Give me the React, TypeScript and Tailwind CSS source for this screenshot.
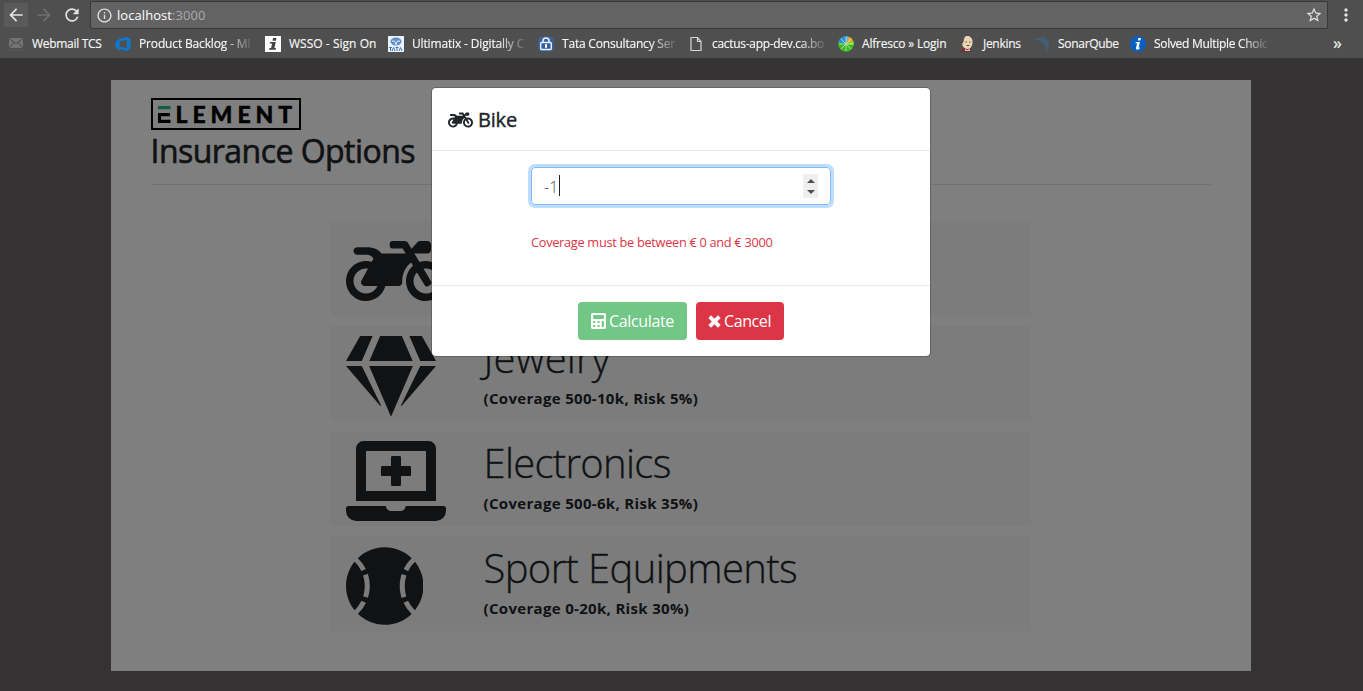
import React from 'react';
import { FaMotorcycle, FaGem, FaLaptopMedical, FaBaseballBall, FaCalculator } from 'react-icons/fa';
import { MdArrowBack, MdArrowForward, MdRefresh, MdInfoOutline, MdStarBorder, MdMoreVert } from 'react-icons/md';

type BookmarkProps = { icon: React.ReactNode; label: string; width: string; fade?: boolean; tracking?: string };

function Bookmark({ icon, label, width, fade, tracking = 'tracking-[-0.3px]' }: BookmarkProps) {
  return (
    <div className={`flex h-full shrink-0 items-center gap-2 ${width}`}>
      <span className="flex h-4 w-4 shrink-0 items-center justify-center">{icon}</span>
      <span className={`whitespace-nowrap text-[12px] leading-4 text-[#f6f6f6] [-webkit-text-stroke:0.15px_#f6f6f6] ${tracking} ${fade ? '[mask-image:linear-gradient(to_right,black_calc(100%_-_26px),rgb(0_0_0/0.15)_100%)]' : ''}`}>
        {label}
      </span>
    </div>
  );
}

function MailIcon() {
  return (
    <svg width="16" height="16" viewBox="0 0 16 16">
      <rect x="1" y="2" width="14" height="10" fill="#747474" />
      <path d="M1 2.500l7 5 7-5M1 12l5-5.500M15 12l-5-5.500" stroke="#484848" fill="none" />
      <path d="M1 14h14" stroke="#5f5f5f" />
    </svg>
  );
}

function AzureIcon() {
  return (
    <svg width="17" height="16" viewBox="0 0 17 16">
      <path d="M.5 5.500L5 2.500 12 .5l4.500 2v10L13 15.500 5 13.500v2L.5 11zM5 5v6l7.500 1.500V3.500z" fill="#0e78cf" fillRule="evenodd" />
    </svg>
  );
}

function InfoSquareIcon() {
  return (
    <svg width="16" height="16" viewBox="0 0 16 16">
      <rect width="16" height="16" fill="#fff" />
      <path d="M8 2h3.500l-.6 2.700H7.500zM5 6h5.800L9.400 12H11l-.4 1.700H4L4.500 12h1.700L7 7.600H4.700z" fill="#444" />
    </svg>
  );
}

function TataIcon() {
  return (
    <svg width="16" height="16" viewBox="0 0 16 16">
      <rect width="16" height="16" fill="#e9f1fb" />
      <ellipse cx="8" cy="5.500" rx="5.500" ry="4" fill="#5f8fc9" />
      <path d="M4 5.500c2.500-1.500 3.500 0 3.500 3M12 5.500c-2.500-1.500-3.500 0-3.500 3" stroke="#fff" fill="none" />
      <path d="M1 11.500h3M2.500 11.500v3.500M4 15l1.500-3.500L7 15M7.500 11.500h3M9 11.500v3.500M11 15l1.500-3.500L14 15" stroke="#4578b8" fill="none" />
    </svg>
  );
}

function LockIcon() {
  return (
    <svg width="16" height="16" viewBox="0 0 16 16">
      <rect x=".5" y=".5" width="15" height="15" rx="4" fill="#3d639f" />
      <path d="M5 6.500V5a3 3 0 016 0v1.500" stroke="#e8f0fc" strokeWidth="1.500" fill="none" />
      <rect x="2.700" y="6.500" width="10.600" height="7" rx="1" fill="#315f9f" stroke="#e8f0fc" strokeWidth="1.400" />
      <path d="M8 8.300v3.400" stroke="#fff" strokeWidth="2" />
    </svg>
  );
}

function PageIcon() {
  return (
    <svg width="16" height="16" viewBox="0 0 16 16">
      <path d="M3 1.500h6.500l3.500 4v9H3zM9.500 1.500v4H13" stroke="#d8d8d8" strokeWidth="1.200" fill="none" />
    </svg>
  );
}

function AlfrescoIcon() {
  return (
    <svg width="16" height="16" viewBox="0 0 16 16">
      <circle cx="8" cy="8" r="7.800" fill="#3fba25" />
      <path d="M8 8L.4 6.500A7.800 7.800 0 018 .2z" fill="#2e8fe0" />
      <path d="M8 8V.2a7.800 7.800 0 013 .6z" fill="#59b5f0" />
      <path d="M8 8l3-7.200a7.800 7.800 0 014 3.700z" fill="#f5a623" />
      <path d="M8 8l7-3.500a7 7 0 01.6 4.500z" fill="#8fd638" />
      <path d="M8 1v14M1 8h14M3 3l10 10M13 3L3 13" stroke="#c9f0c0" strokeWidth=".7" />
    </svg>
  );
}

function JenkinsIcon() {
  return (
    <svg width="16" height="16" viewBox="0 0 16 16">
      <path d="M1 16l3-4h7l3 4z" fill="#7a2f32" />
      <path d="M3 6c0-4 2.500-6 5.500-6S13.500 2.500 13.500 6s-1.500 7-5 7S3 10 3 6z" fill="#ecd5b5" />
      <path d="M3 8C2 3 4 1 6.500 .3 4.800 2.500 5 4 4.500 6z" fill="#5d4c42" />
      <path d="M6.500 6H8M10 6h1.500M7.500 9.500h3" stroke="#6b4a3a" />
      <path d="M6 13l2.500 1L11 12.500V15H6z" fill="#c9c5c5" />
    </svg>
  );
}

function SonarIcon() {
  return (
    <svg width="16" height="16" viewBox="0 0 16 16">
      <path d="M1 3c7 0 12 5 12 12M5 2c5 1.500 8.500 5 9.500 10M9 1.500c3 1.300 4.700 3.500 5.500 6" stroke="#386a8e" strokeWidth="1.100" fill="none" />
    </svg>
  );
}

function InfoCircleIcon() {
  return (
    <svg width="16" height="16" viewBox="0 0 16 16">
      <circle cx="8" cy="8" r="8" fill="#0b5fc0" />
      <path d="M8.400 2h2.500l-.5 2.500H7.900zM5.800 6h4.100l-1.300 6 1.500-.7-.3 1.300c-1.700 1.600-4.200 1.500-3.800-.5L7.100 7.300H5.600z" fill="#fff" />
    </svg>
  );
}

function BrowserBar() {
  return (
    <header className="flex h-[59px] flex-col border-b border-[#383838] bg-[#4f4f4f]">
      <div className="flex h-[29px] items-center">
        <div className="ml-1 flex h-6 w-6 items-center justify-center bg-[#595959] text-[#e4e4e4]">
          <MdArrowBack size={20} />
        </div>
        <div className="ml-1 flex h-6 w-6 items-center justify-center text-[#707070]">
          <MdArrowForward size={20} />
        </div>
        <div className="ml-1 flex h-6 w-6 items-center justify-center text-[#e4e4e4]">
          <MdRefresh size={20} />
        </div>
        <div className="ml-1.5 mt-px flex h-7 w-[1238px] items-center rounded-[2px] border border-[#383838] bg-[#636363] pl-[5px] pr-1">
          <MdInfoOutline size={17} className="text-[#dedede]" />
          <span className="ml-1 pt-px text-[13px] tracking-[0.060px] text-white">
            localhost<span className="text-[#aaaaaa]">:3000</span>
          </span>
          <MdStarBorder size={18} className="ml-auto text-[#e4e4e4]" />
        </div>
        <MdMoreVert size={20} className="ml-2 text-[#e4e4e4]" />
      </div>
      <nav className="flex h-[29px] items-center pl-2">
        <Bookmark icon={<MailIcon />} label="Webmail TCS" width="w-[107px]" />
        <Bookmark icon={<AzureIcon />} label="Product Backlog - Mi" width="w-[150px]" fade tracking="tracking-[-0.150px]" />
        <Bookmark icon={<InfoSquareIcon />} label="WSSO - Sign On" width="w-[123px]" tracking="tracking-[0.03px]" />
        <Bookmark icon={<TataIcon />} label="Ultimatix - Digitally C" width="w-[150px]" fade tracking="tracking-[-0.150px]" />
        <Bookmark icon={<LockIcon />} label="Tata Consultancy Ser" width="w-[150px]" fade tracking="tracking-[-0.200px]" />
        <Bookmark icon={<PageIcon />} label="cactus-app-dev.ca.bo" width="w-[150px]" fade />
        <Bookmark icon={<AlfrescoIcon />} label="Alfresco » Login" width="w-[121px]" tracking="tracking-[-0.2px]" />
        <Bookmark icon={<JenkinsIcon />} label="Jenkins" width="w-[75px]" />
        <Bookmark icon={<SonarIcon />} label="SonarQube" width="w-[96px]" />
        <Bookmark icon={<InfoCircleIcon />} label="Solved Multiple Choic" width="w-[148px]" fade />
        <span className="ml-auto mr-[21px] pb-0.5 text-[16px] font-semibold text-[#e4e4e4]">»</span>
      </nav>
    </header>
  );
}

function ElementLogo() {
  return (
    <div className="flex h-8 w-[150px] items-center border-2 border-black pl-[5px]">
      <svg width="13" height="17" viewBox="0 0 13 17">
        <path d="M0 0h12.500v3.300H0z" fill="#24bf91" />
        <path d="M0 7h12v3.300H3V13.700h9.500V17H0z" fill="#000" />
      </svg>
      <span className="ml-[5px] whitespace-nowrap font-['Lato'] text-[23px] font-black leading-7 tracking-[4.950px] text-black [-webkit-text-stroke:0.4px_black]">LEMENT</span>
    </div>
  );
}

type OptionProps = { icon: React.ReactNode; title: string; detail: string; titleTracking?: string };

function InsuranceOption({ icon, title, detail, titleTracking = 'tracking-[-0.640px]' }: OptionProps) {
  return (
    <li className="flex h-[95px] w-[700px] bg-[#f8f9fa] pl-[15px]">
      <div className="flex h-full w-[138px] shrink-0 items-center pt-[5px]">{icon}</div>
      <div className="pt-2">
        <h2 className={`whitespace-nowrap text-[40px] font-light leading-[48px] [-webkit-text-stroke:0.3px_#212529] ${titleTracking}`}>{title}</h2>
        <p className="mt-1 whitespace-nowrap text-[15px] font-bold leading-6 tracking-[0.320px]">{detail}</p>
      </div>
    </li>
  );
}

function OptionsPage() {
  return (
    <main className="mx-auto mt-[21px] h-[591px] w-[1140px] bg-white px-10 pt-[18px] text-[#212529]">
      <ElementLogo />
      <h1 className="mt-0.5 whitespace-nowrap text-[32px] font-medium leading-[38px] tracking-[-0.540px] [-webkit-text-stroke:0.6px_#212529]">Insurance Options</h1>
      <div className="mt-3.5 border-t border-black/10" />
      <ul className="mt-9 ml-[180px] flex flex-col gap-2.5">
        <InsuranceOption icon={<FaMotorcycle className="h-20 w-[100px]" />} title="Bike" detail="(Coverage 0-3k, Risk 30%)" />
        <InsuranceOption icon={<FaGem className="h-20 w-[90px]" />} title="Jewelry" detail="(Coverage 500-10k, Risk 5%)" titleTracking="tracking-[0.150px]" />
        <InsuranceOption icon={<FaLaptopMedical className="h-20 w-[100px]" />} title="Electronics" detail="(Coverage 500-6k, Risk 35%)" titleTracking="tracking-[-0.700px]" />
        <InsuranceOption icon={<FaBaseballBall className="h-20 w-[77.500px]" />} title="Sport Equipments" detail="(Coverage 0-20k, Risk 30%)" />
      </ul>
    </main>
  );
}

function CoverageDialog() {
  return (
    <section role="dialog" className="mt-[28px] flex h-[270px] w-[500px] flex-col rounded-[5px] border border-black/20 bg-white bg-clip-padding text-[#212529]">
      <header className="flex h-[63px] items-center border-b border-[#e9ecef] px-4">
        <FaMotorcycle className="mt-px h-5 w-[25px]" />
        <h5 className="ml-[5px] mt-0.5 text-[20px] font-medium tracking-[-0.200px] [-webkit-text-stroke:0.4px_#212529]">Bike</h5>
      </header>
      <div className="h-[135px] border-b border-[#e9ecef] px-[99px] pt-4">
        <div className="flex h-[38px] w-[300px] items-center rounded border border-[#80bdff] px-3 text-[16px] text-[#495057] shadow-[0_0_0_3px_rgba(0,123,255,0.25)]">
          <span className="pt-px font-light">-1</span>
          <span className="mb-0.5 ml-px h-[21px] w-px bg-[#222]" />
          <span className="ml-auto flex h-6 w-[15px] flex-col items-center justify-center gap-[7px] bg-[#eee]">
            <svg width="8" height="4" viewBox="0 0 8 4"><path d="M0 4l4-4 4 4z" fill="#505050" /></svg>
            <svg width="8" height="4" viewBox="0 0 8 4"><path d="M0 0l4 4 4-4z" fill="#505050" /></svg>
          </span>
        </div>
        <p className="mt-[27px] whitespace-nowrap text-[12.800px] leading-5 tracking-[-0.310px] text-[#dc3545]">Coverage must be between € 0 and € 3000</p>
      </div>
      <footer className="flex flex-1 items-center justify-center gap-[9px]">
        <button className="flex h-[38px] w-[109px] items-center rounded bg-[#72c686] pl-[13px] text-[16px] text-white">
          <FaCalculator className="h-4 w-[15px]" preserveAspectRatio="none" />
          <span className="ml-[3px] tracking-[-0.350px]">Calculate</span>
        </button>
        <button className="flex h-[38px] w-[88px] items-center rounded bg-[#dc3545] pl-3 text-[16px] text-white">
          <svg width="13" height="13" viewBox="0 0 13 13"><path d="M1.700 1.700l9.600 9.600M11.300 1.700l-9.600 9.600" stroke="#fff" strokeWidth="3.800" /></svg>
          <span className="ml-[3px] tracking-[-0.400px]">Cancel</span>
        </button>
      </footer>
    </section>
  );
}

export default function App() {
  return (
    <div className="h-[691px] w-[1363px] overflow-hidden bg-[#696566] font-['Open_Sans','Noto_Sans',sans-serif]">
      <BrowserBar />
      <div className="relative h-[632px] overflow-hidden pl-px pr-[3px]">
        <OptionsPage />
        <div className="absolute inset-0 flex items-start justify-center bg-black/50 pr-px">
          <CoverageDialog />
        </div>
      </div>
    </div>
  );
}
